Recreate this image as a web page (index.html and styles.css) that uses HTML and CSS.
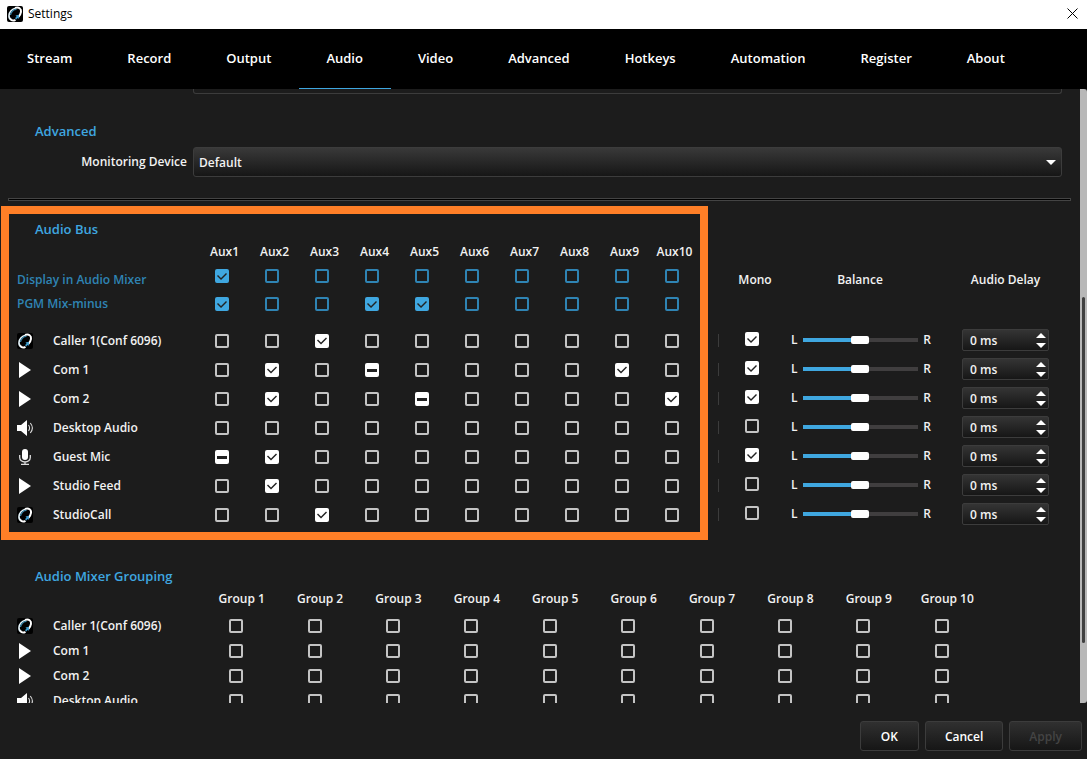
FILE: index.html
```html
<!doctype html>
<html lang="en">
<head>
  <meta charset="utf-8" />
  <meta name="viewport" content="width=device-width,initial-scale=1" />
  <title>Settings</title>
  <link rel="stylesheet" href="styles.css">
</head>
<body>
  <!-- shared icons -->
  <svg class="defs" aria-hidden="true">
    <symbol id="logo" viewBox="0 0 16 16">
      <rect width="16" height="16" rx="2" fill="#000"/>
      <path d="M8.500 2.200C5 2.800 2.300 6 2 9.300c-.2 2 .6 3.600 2 4.200" fill="none" stroke="#e6f4fa" stroke-width="1.600"/>
      <path d="M9.500 3.400C6.500 3.300 4 6 3.500 9" fill="none" stroke="#3a86a8" stroke-width="1.200"/>
      <path d="M8 1.900c3.800-1 6.500.6 6 4-.3 2-1.200 3.700-2.500 5" fill="none" stroke="#fff" stroke-width="2"/>
      <path d="M3.200 12.900c1.400 1.900 3.600 1.900 5.300.9" fill="none" stroke="#fff" stroke-width="2"/>
      <path d="M8.500 9.600l3.300-.8.200 4-1.400-.9-1.400 1.500-1.200-1.300 1.600-1.400z" fill="#3f9fd0"/>
    </symbol>
    <symbol id="play" viewBox="0 0 16 16"><path d="M2 0l12 8L2 16z" fill="#fff"/></symbol>
    <symbol id="speaker" viewBox="0 0 16 16">
      <path d="M0 5h4l6-5v16l-6-5H0z" fill="#fff"/>
      <path d="M11.500 5c1.300 1.800 1.300 4.200 0 6M13.300 3c2.500 3 2.500 7 0 10" fill="none" stroke="#ddd" stroke-width="1.100"/>
    </symbol>
    <symbol id="mic" viewBox="0 0 16 16">
      <rect x="5" y="0" width="6" height="11" rx="3" fill="#fff"/>
      <path d="M2.700 6v2.500a5.300 4.500 0 0 0 10.600 0V6M8 13v2.500M4 15.300h8" fill="none" stroke="#ddd" stroke-width="1.300"/>
    </symbol>
  </svg>

  <header class="titlebar">
    <svg class="icon"><use href="#logo"/></svg>
    <span>Settings</span>
    <button type="button" class="close" aria-label="Close">
      <svg viewBox="0 0 11 11"><path d="M.5.5l10 10M10.500.5l-10 10" stroke="#000" fill="none"/></svg>
    </button>
  </header>

  <nav class="tabs">
    <a href="#stream">Stream</a>
    <a href="#record">Record</a>
    <a href="#output">Output</a>
    <a href="#audio" class="active">Audio</a>
    <a href="#video">Video</a>
    <a href="#advanced">Advanced</a>
    <a href="#hotkeys">Hotkeys</a>
    <a href="#automation">Automation</a>
    <a href="#register">Register</a>
    <a href="#about">About</a>
  </nav>

  <div class="scroll">
    <main class="content">
      <div class="field-end"></div>

      <section class="advanced">
        <h2>Advanced</h2>
        <div class="field">
          <label for="device">Monitoring Device</label>
          <div class="select">
            <select id="device"><option>Default</option></select>
            <svg viewBox="0 0 10 5"><path d="M0 0h10L5 5z" fill="#fff"/></svg>
          </div>
        </div>
      </section>

      <hr>

      <section class="bus">
        <div class="frame"></div>
        <h2>Audio Bus</h2>
        <table id="busTable">
          <colgroup>
            <col class="c-name"><col class="c-aux" span="10"><col class="c-sep"><col class="c-mono"><col><col class="c-delay">
          </colgroup>
          <thead></thead>
          <tbody></tbody>
        </table>
      </section>

      <section class="groups">
        <h2>Audio Mixer Grouping</h2>
        <table id="groupTable">
          <colgroup><col class="c-name"><col span="10"></colgroup>
          <thead></thead>
          <tbody></tbody>
        </table>
      </section>
    </main>
    <div class="scrollbar"><div class="thumb"></div></div>
  </div>

  <footer class="actions">
    <button type="button">OK</button>
    <button type="button">Cancel</button>
    <button type="button" disabled>Apply</button>
  </footer>

  <script src="settings.js"></script>
</body>
</html>
```
FILE: styles.css
```css
:root{--bg:#1c1c1c;--accent:#3fa7e0;--accent-dim:#2f84b4;--line:#3c3c3c;--text:#f2f2f2}
*{box-sizing:border-box}
body{margin:0;height:100vh;display:flex;flex-direction:column;overflow:hidden;background:var(--bg);color:var(--text);font:600 12px/18px "Open Sans","Noto Sans",sans-serif}
button,input,select{font:inherit;color:inherit}
h2{margin:0 0 0 35px;font-size:13px;line-height:18px;font-weight:600;color:var(--accent)}
.defs{display:none}
.icon{width:16px;height:16px;display:block;flex:none}

.titlebar{display:flex;align-items:center;gap:5px;height:29px;padding:0 9px 2px 7px;background:#fff;color:#000;font-weight:400}
.close{margin-left:auto;padding:0;border:0;background:none;line-height:0}
.close svg{width:11px;height:11px}

.tabs{display:flex;height:60px;background:#000}
.tabs a{padding:0 28px 0 27px;line-height:59px;font-size:13px;color:#fff;text-decoration:none;border-bottom:1px solid transparent}
.tabs .active{border-color:var(--accent)}

.scroll{flex:1;min-height:0;display:flex}
.content{flex:1;min-width:0;overflow:hidden}
.scrollbar{width:7px;padding:208px 2px 0;background:#b8b8b8;border-radius:0 3px 3px 0}
.thumb{height:346px;width:3px;background:#404040;border-radius:2px}

.field-end{height:5px;margin:0 18px 0 193px;border:1px solid var(--line);border-top:0;border-radius:0 0 3px 3px}
.advanced{padding-top:28px}
.field{display:flex;align-items:center;margin:7px 18px 0 0}
.field label{width:193px;padding-right:6px;text-align:right}
.select{flex:1;position:relative}
.select select{display:block;width:100%;height:30px;padding:2px 5px 0;appearance:none;border:1px solid var(--line);border-radius:3px;background:linear-gradient(#393939,#161616)}
.select svg{position:absolute;right:6px;top:13px;width:10px;height:5px;pointer-events:none}
hr{height:3px;margin:21px 9px 5px 8px;border:1px solid #444;background:#000}

table{border-collapse:collapse;table-layout:fixed}
th,td{padding:0;font-weight:600;text-align:center}
td{line-height:0}
.c-name{width:180px}
.c-aux{width:50px}
.c-sep{width:28px}
.c-mono{width:54px}
.c-delay{width:108px}
.name{text-align:left;line-height:18px}
.source{display:flex;align-items:center;gap:20px}

.bus{position:relative;padding:14px 31px 11px 17px}
.bus h2,.groups h2{margin-left:18px}
.bus table{width:100%;margin-top:2px}
.bus thead .aux{height:22px;padding:2px 0 0 5px}
.bus .master{height:28px}
.bus .master .name{color:var(--accent-dim)}
.bus .master:nth-child(2) th{padding-top:8px}
.bus .master .mono{padding-left:6px}
.bus .gap{height:8px}
.bus tbody tr{height:29px}
.bus td.mono{padding-bottom:3px}
.bus .delay{padding-left:21px}
.bus td.delay{padding-bottom:1px}
.frame{position:absolute;top:0;bottom:0;left:1px;width:707px;border:8px solid #ff7f27;pointer-events:none}
.sep i{display:block;width:1px;height:13px;margin-left:21px;background:var(--line)}

input[type=checkbox]{appearance:none;width:14px;height:14px;margin:0;border:2px solid #c4c4c4;border-radius:2px;vertical-align:middle;position:relative}
input[type=checkbox]:checked,input[type=checkbox]:indeterminate{background:#fff;border-color:#fff}
input[type=checkbox]:checked::before{content:"";position:absolute;inset:-2px;background:#222;clip-path:polygon(2px 7px,3px 6px,6px 9px,11px 4px,12px 5px,6px 11px)}
input[type=checkbox]:indeterminate::before{content:"";position:absolute;left:0;right:0;top:4px;height:3px;background:#222}
.master input[type=checkbox]{border-color:var(--accent-dim)}
.master input[type=checkbox]:checked{background:var(--accent);border-color:var(--accent)}

.balance{display:flex;align-items:center;justify-content:space-between;gap:5px;padding:0 10px 2px 12px;line-height:18px}
input[type=range]{appearance:none;flex:1;min-width:0;height:8px;margin:0;background:linear-gradient(90deg,var(--accent) 50%,#403e3f 50%) center/100% 4px no-repeat}
input[type=range]::-webkit-slider-thumb{appearance:none;width:18px;height:8px;border-radius:2px;background:#fff}

.spin{display:flex;height:22px;border:1px solid var(--line);border-radius:2px;background:linear-gradient(#343434,#161616)}
.spin input{flex:1;min-width:0;padding:0 0 0 7px;border:0;background:none}
.spin div{width:12px;display:flex;flex-direction:column;justify-content:center;gap:5px}
.spin button{display:block;height:5px;padding:0;border:0;background:none;line-height:0}
.spin svg{display:block;width:10px;height:5px}

.groups{padding:27px 99px 0 17px}
.groups table{width:100%;margin-top:3px}
.groups thead th{height:25px;padding:0 0 3px 11px}
.groups tbody tr{height:25px}

.actions{display:flex;justify-content:flex-end;gap:6px;height:56px;padding:18px 5px 8px}
.actions button{min-width:59px;padding:1px 19px 0;border:1px solid var(--line);border-radius:3px;background:linear-gradient(#303030,#161616);color:#fff}
.actions button:disabled{color:#444}
```
FILE: settings.js
```js
const sources = [
  // on: checked aux, part: partly checked aux
  { name: 'Caller 1(Conf 6096)', icon: 'logo', on: [3], part: [], mono: true },
  { name: 'Com 1', icon: 'play', on: [2, 9], part: [4], mono: true },
  { name: 'Com 2', icon: 'play', on: [2, 10], part: [5], mono: true },
  { name: 'Desktop Audio', icon: 'speaker', on: [], part: [], mono: false },
  { name: 'Guest Mic', icon: 'mic', on: [2], part: [1], mono: true },
  { name: 'Studio Feed', icon: 'play', on: [2], part: [], mono: false },
  { name: 'StudioCall', icon: 'logo', on: [3], part: [], mono: false }
];
const nums = [1, 2, 3, 4, 5, 6, 7, 8, 9, 10];

function check(label, on, part){
  return `<input type="checkbox" aria-label="${label}"${on ? ' checked' : ''}${part ? ' data-part' : ''}>`;
}

function nameCell(s){
  return `<th class="name" scope="row"><div class="source"><svg class="icon"><use href="#${s.icon}"/></svg>${s.name}</div></th>`;
}

function masterRow(name, on, extra){
  return `<tr class="master"><th class="name" scope="row">${name}</th>` +
    nums.map(n => `<td>${check(name + ' Aux' + n, on.includes(n))}</td>`).join('') + extra + '</tr>';
}

function busRow(s){
  return '<tr>' + nameCell(s) +
    nums.map(n => `<td>${check(s.name + ' Aux' + n, s.on.includes(n), s.part.includes(n))}</td>`).join('') +
    `<td class="sep"><i></i></td><td class="mono">${check(s.name + ' Mono', s.mono)}</td>` +
    `<td><div class="balance">L<input type="range" aria-label="${s.name} Balance" value="50">R</div></td>` +
    `<td class="delay"><div class="spin"><input type="text" aria-label="${s.name} Audio Delay" value="0 ms"><div>` +
    '<button type="button" aria-label="Increase"><svg viewBox="0 0 10 5"><path d="M0 5h10L5 0z" fill="#fff"/></svg></button>' +
    '<button type="button" aria-label="Decrease"><svg viewBox="0 0 10 5"><path d="M0 0h10L5 5z" fill="#fff"/></svg></button>' +
    '</div></div></td></tr>';
}

const bus = document.getElementById('busTable');
bus.tHead.innerHTML =
  '<tr><td></td>' + nums.map(n => `<th class="aux" scope="col">Aux${n}</th>`).join('') + '<td colspan="4"></td></tr>' +
  masterRow('Display in Audio Mixer', [1], '<td></td><th class="mono" scope="col">Mono</th><th scope="col">Balance</th><th class="delay" scope="col">Audio Delay</th>') +
  masterRow('PGM Mix-minus', [1, 4, 5], '<td colspan="4"></td>') +
  '<tr><td class="gap" colspan="15"></td></tr>';
bus.tBodies[0].innerHTML = sources.map(busRow).join('');

// only the first sources are grouped
const group = document.getElementById('groupTable');
group.tHead.innerHTML = '<tr><td></td>' + nums.map(n => `<th scope="col">Group ${n}</th>`).join('') + '</tr>';
group.tBodies[0].innerHTML = sources.slice(0, 4).map(s => '<tr>' + nameCell(s) +
  nums.map(n => `<td>${check(s.name + ' Group ' + n)}</td>`).join('') + '</tr>').join('');

document.querySelectorAll('[data-part]').forEach(box => { box.indeterminate = true; });
```
